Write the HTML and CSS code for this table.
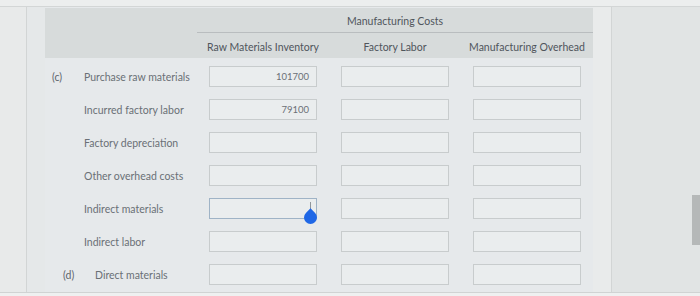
FILE: index.html
```html
<!DOCTYPE html>
<html>
<head>
<meta charset="utf-8">
<link rel="stylesheet" href="styles.css">
</head>
<body>
<div class="topbar"></div>
<div class="main">
  <div class="gutter"></div>
  <div class="panel">
    <div class="header">
      <div class="group-row">
        <div></div>
        <div class="group-title">Manufacturing Costs</div>
      </div>
      <div class="col-row">
        <div></div>
        <div class="col-title">Raw Materials Inventory</div>
        <div class="col-title">Factory Labor</div>
        <div class="col-title">Manufacturing Overhead</div>
      </div>
    </div>
    <div class="rows">
      <div class="row">
        <div class="label"><span class="mark">(c)</span><span>Purchase raw materials</span></div>
        <div class="cell"><div class="input">101700</div></div>
        <div class="cell"><div class="input"></div></div>
        <div class="cell"><div class="input"></div></div>
      </div>
      <div class="row">
        <div class="label"><span class="mark"></span><span>Incurred factory labor</span></div>
        <div class="cell"><div class="input">79100</div></div>
        <div class="cell"><div class="input"></div></div>
        <div class="cell"><div class="input"></div></div>
      </div>
      <div class="row">
        <div class="label"><span class="mark"></span><span>Factory depreciation</span></div>
        <div class="cell"><div class="input"></div></div>
        <div class="cell"><div class="input"></div></div>
        <div class="cell"><div class="input"></div></div>
      </div>
      <div class="row">
        <div class="label"><span class="mark"></span><span>Other overhead costs</span></div>
        <div class="cell"><div class="input"></div></div>
        <div class="cell"><div class="input"></div></div>
        <div class="cell"><div class="input"></div></div>
      </div>
      <div class="row">
        <div class="label"><span class="mark"></span><span>Indirect materials</span></div>
        <div class="cell"><div class="input focused"><span class="caret"></span><span class="handle"></span></div></div>
        <div class="cell"><div class="input"></div></div>
        <div class="cell"><div class="input"></div></div>
      </div>
      <div class="row">
        <div class="label"><span class="mark"></span><span>Indirect labor</span></div>
        <div class="cell"><div class="input"></div></div>
        <div class="cell"><div class="input"></div></div>
        <div class="cell"><div class="input"></div></div>
      </div>
      <div class="row">
        <div class="label"><span class="mark mark-d">(d)</span><span>Direct materials</span></div>
        <div class="cell"><div class="input"></div></div>
        <div class="cell"><div class="input"></div></div>
        <div class="cell"><div class="input"></div></div>
      </div>
    </div>
  </div>
  <div class="edge"></div>
  <div class="right"><div class="scrollbar"></div></div>
</div>
<div class="bottombar"></div>
</body>
</html>
```
FILE: styles.css
```css
html, body {
  margin: 0;
  padding: 0;
}
body {
  width: 700px;
  height: 296px;
  overflow: hidden;
  background: #e4e7e8;
  font-family: Lato, "Open Sans", sans-serif;
  font-size: 10.5px;
  color: #5d6369;
  display: flex;
  flex-direction: column;
}
.topbar {
  height: 6px;
  background: #eceeee;
  border-bottom: 1px solid #d3d6d6;
}
.main {
  flex: 1;
  display: flex;
  background: #e5e8e9;
}
.gutter {
  width: 26px;
  background: #e8eaea;
  border-right: 1px solid #d2d5d5;
  margin-right: 18px;
}
.panel {
  width: 548px;
  display: flex;
  flex-direction: column;
  background: #e6e9eb;
}
.header {
  margin-top: 1px;
  height: 50px;
  background: #d7dbdb;
  display: flex;
  flex-direction: column;
}
.group-row {
  height: 25px;
  display: grid;
  grid-template-columns: 152px 1fr;
}
.group-title {
  display: flex;
  align-items: center;
  justify-content: center;
  border-bottom: 1px solid #b9bdbf;
  padding-top: 2px;
  color: #4f555b;
}
.col-row {
  flex: 1;
  padding-top: 3px;
  display: grid;
  grid-template-columns: 152px 132px 132px 132px;
  align-items: center;
}
.col-title {
  text-align: center;
  color: #4f555b;
  white-space: nowrap;
}
.rows {
  padding-top: 2px;
  display: flex;
  flex-direction: column;
}
.row {
  height: 33px;
  display: grid;
  grid-template-columns: 152px 132px 132px 132px;
  align-items: center;
}
.label {
  display: flex;
  align-items: center;
  color: #6a7076;
  white-space: nowrap;
}
.mark {
  width: 32px;
  padding-left: 7px;
  color: #5f656b;
}
.mark-d {
  padding-left: 18px;
  width: 32px;
}
.cell {
  display: flex;
  justify-content: center;
}
.input {
  position: relative;
  box-sizing: border-box;
  width: 108px;
  height: 21px;
  border: 1px solid #c8cccd;
  background: #eaedee;
  display: flex;
  align-items: center;
  justify-content: flex-end;
  padding-right: 7px;
  color: #6a7076;
  font-size: 9.5px;
}
.input.focused {
  border-color: #9fb3c6;
  border-width: 1.5px;
}
.caret {
  position: absolute;
  right: 5px;
  top: 3px;
  width: 1.5px;
  height: 13px;
  background: #8f969b;
}
.handle {
  position: absolute;
  right: -1px;
  top: 12px;
  width: 13px;
  height: 13px;
  background: #1f67e6;
  border-radius: 50% 0 50% 50%;
  transform: rotate(-45deg);
}
.edge {
  width: 18px;
  background: #e9ebeb;
  border-right: 1px solid #d2d5d5;
}
.right {
  flex: 1;
  background: #e1e4e4;
  display: flex;
  justify-content: flex-end;
  padding-top: 188px;
}
.scrollbar {
  width: 8px;
  height: 50px;
  background: #b5b8b8;
}
.bottombar {
  height: 3px;
  background: #eef0f0;
  border-top: 1px solid #d0d3d3;
}
```
